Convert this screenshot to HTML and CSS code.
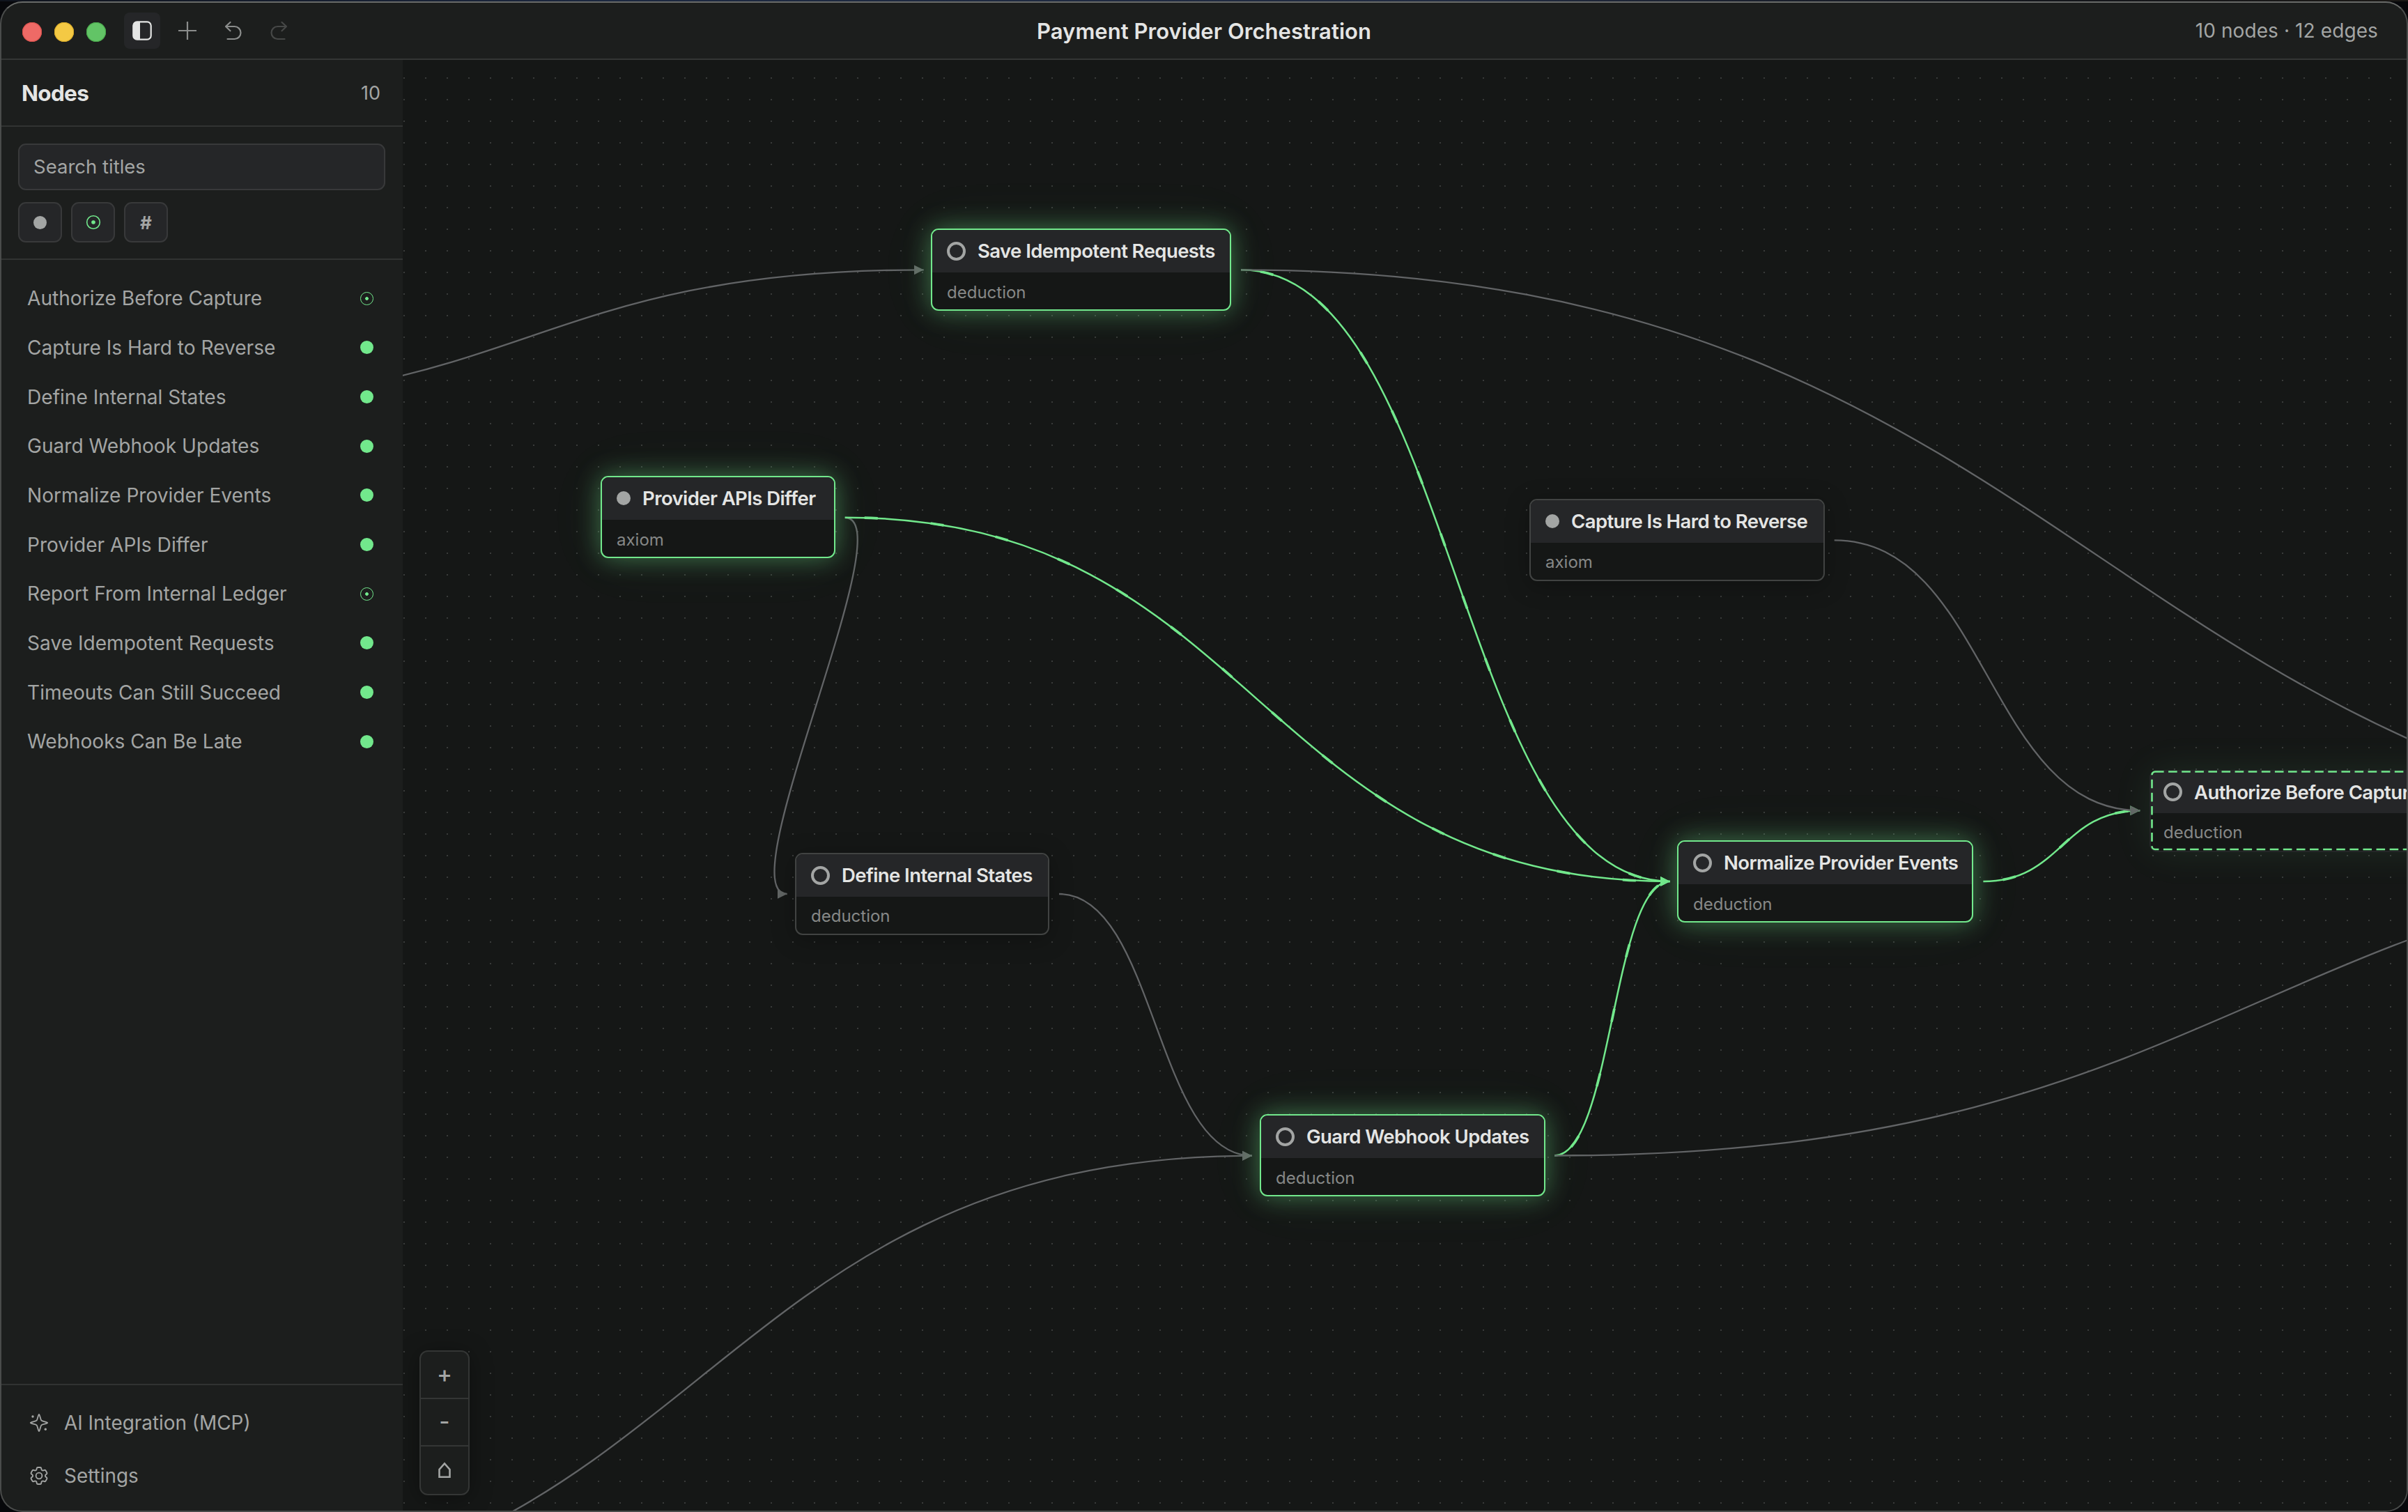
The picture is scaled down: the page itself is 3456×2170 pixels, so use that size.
FILE: index.html
```html
<!DOCTYPE html>
<html lang="en">
<head>
<meta charset="utf-8">
<title>Payment Provider Orchestration</title>
<link rel="stylesheet" href="styles.css">
</head>
<body>
<div class="window">
  <header class="topbar">
    <div class="topbar-left">
      <div class="lights"><i class="light red"></i><i class="light yellow"></i><i class="light green"></i></div>
      <div class="tools">
        <button class="tool active" aria-label="Toggle sidebar">
          <svg width="28" height="28" viewBox="0 0 28 28"><rect x="1.3" y="1.3" width="25.4" height="25.4" rx="5.5" fill="none" stroke="#e4e5e4" stroke-width="2.2"/><path d="M6.5 1h4.5v26H6.5A5.5 5.5 0 0 1 1 21.500V6.500A5.500 5.500 0 0 1 6.500 1z" fill="#e4e5e4"/></svg>
        </button>
        <button class="tool" aria-label="Add node">
          <svg width="28" height="28" viewBox="0 0 28 28"><path d="M14 1v26M1 14h26" fill="none" stroke="#8b8d8c" stroke-width="2.200"/></svg>
        </button>
        <button class="tool" aria-label="Undo">
          <svg width="28" height="28" viewBox="0 0 28 28"><path d="M9.500 2 3 8l6.500 6.300M3 8h12.500a9 9 0 0 1 0 18H5.500" fill="none" stroke="#8b8d8c" stroke-width="2.200" stroke-linecap="round" stroke-linejoin="round"/></svg>
        </button>
        <button class="tool" aria-label="Redo">
          <svg width="28" height="28" viewBox="0 0 28 28"><path d="M18.500 2 25 8l-6.500 6.300M25 8H12.500a9 9 0 0 0 0 18h10" fill="none" stroke="#464847" stroke-width="2.200" stroke-linecap="round" stroke-linejoin="round"/></svg>
        </button>
      </div>
    </div>
    <h1 class="doc-title">Payment Provider Orchestration</h1>
    <div class="stats">10 nodes · 12 edges</div>
  </header>

  <div class="main">
    <aside class="sidebar">
      <div class="side-head"><h2>Nodes</h2><span class="count">10</span></div>
      <div class="side-search">
        <div class="search">Search titles</div>
        <div class="filters">
          <button class="filter"><i class="f-dot"></i></button>
          <button class="filter"><svg width="22" height="22" viewBox="0 0 22 22"><circle cx="11" cy="11" r="9.300" fill="none" stroke="#72e88c" stroke-width="1.600"/><circle cx="11" cy="11" r="2.800" fill="#72e88c"/></svg></button>
          <button class="filter">#</button>
        </div>
      </div>
      <ul class="list">
        <li>Authorize Before Capture<i class="st target"></i></li>
        <li>Capture Is Hard to Reverse<i class="st"></i></li>
        <li>Define Internal States<i class="st"></i></li>
        <li>Guard Webhook Updates<i class="st"></i></li>
        <li>Normalize Provider Events<i class="st"></i></li>
        <li>Provider APIs Differ<i class="st"></i></li>
        <li>Report From Internal Ledger<i class="st target"></i></li>
        <li>Save Idempotent Requests<i class="st"></i></li>
        <li>Timeouts Can Still Succeed<i class="st"></i></li>
        <li>Webhooks Can Be Late<i class="st"></i></li>
      </ul>
      <nav class="side-foot">
        <a class="foot-item"><svg width="28" height="28" viewBox="0 0 28 28" fill="none" stroke="#a3a5a4" stroke-width="1.800" stroke-linejoin="round"><path d="M14 2c1.200 0 2 7.300 3.400 8.700S26.200 12.800 26.200 14s-7.400 2-8.800 3.400S15.200 26 14 26s-2-7.200-3.400-8.600S1.800 15.200 1.800 14s7.400-1.900 8.800-3.300S12.800 2 14 2z"/><circle cx="5" cy="5" r="1.700" fill="#a3a5a4" stroke="none"/><circle cx="23.300" cy="23.300" r="1.700" fill="#a3a5a4" stroke="none"/></svg><span>AI Integration (MCP)</span></a>
        <a class="foot-item"><svg width="28" height="28" viewBox="1.500 1.500 21 21" fill="none" stroke="#a3a5a4" stroke-width="1.400" stroke-linejoin="round"><path d="M9.594 3.940c.09-.542.56-.94 1.110-.94h2.593c.55 0 1.020.398 1.110.94l.213 1.281c.063.374.313.686.645.87.074.04.147.083.22.127.325.196.72.257 1.075.124l1.217-.456a1.125 1.125 0 0 1 1.370.49l1.296 2.247a1.125 1.125 0 0 1-.26 1.431l-1.003.827c-.293.241-.438.613-.43.992a7.723 7.723 0 0 1 0 .255c-.008.378.137.75.43.991l1.004.827c.424.35.534.955.26 1.430l-1.298 2.247a1.125 1.125 0 0 1-1.369.491l-1.217-.456c-.355-.133-.75-.072-1.076.124a6.470 6.470 0 0 1-.22.128c-.331.183-.581.495-.644.869l-.213 1.281c-.09.543-.56.94-1.110.94h-2.594c-.55 0-1.019-.398-1.110-.94l-.213-1.281c-.062-.374-.312-.686-.644-.87a6.520 6.520 0 0 1-.22-.127c-.325-.196-.72-.257-1.076-.124l-1.217.456a1.125 1.125 0 0 1-1.369-.49l-1.297-2.247a1.125 1.125 0 0 1 .26-1.431l1.004-.827c.292-.24.437-.613.43-.991a6.932 6.932 0 0 1 0-.255c.007-.38-.138-.751-.43-.992l-1.004-.827a1.125 1.125 0 0 1-.26-1.430l1.297-2.247a1.125 1.125 0 0 1 1.370-.491l1.216.456c.356.133.751.072 1.076-.124.072-.044.146-.086.22-.128.332-.183.582-.495.644-.869l.214-1.280Z"/><circle cx="12" cy="12" r="3.300"/></svg><span>Settings</span></a>
      </nav>
    </aside>

    <main class="canvas">
      <svg class="edges" width="2876" height="2082" viewBox="578 86 2876 2082">
        <defs>
          <marker id="arrow" markerUnits="userSpaceOnUse" markerWidth="15" markerHeight="16" refX="14" refY="7.500" orient="0"><path d="M0 0.500 14 7.500 0 14.500z" fill="#626665"/></marker>
          <marker id="arrow-on" markerUnits="userSpaceOnUse" markerWidth="15" markerHeight="16" refX="14" refY="7.500" orient="0"><path d="M0 0.500 14 7.500 0 14.500z" fill="#72e88c"/></marker>
        </defs>
        <path id="dots" fill="#393b3a"/>
        <g class="edge">
          <path d="M1212.700 743C1299 743 1043 1283 1129.700 1283"/>
        </g>
        <g class="edge on">
          <path d="M1212.700 742.700C1804.700 742.700 1804.700 1265 2396.800 1265"/>
          <path d="M1781 387.300C2089 387.300 2089 1265 2396.800 1265"/>
          <path d="M2231 1658.500C2314 1658.500 2314 1265 2396.800 1265"/>
          <path d="M2846.400 1265C2959 1265 2959 1163.300 3071.300 1163.300"/>
        </g>
        <g class="flow">
          <path d="M1212.700 742.700C1804.700 742.700 1804.700 1265 2396.800 1265"/>
          <path d="M1781 387.300C2089 387.300 2089 1265 2396.800 1265"/>
          <path d="M2231 1658.500C2314 1658.500 2314 1265 2396.800 1265"/>
          <path d="M2846.400 1265C2959 1265 2959 1163.300 3071.300 1163.300"/>
        </g>
        <g class="edge">
          <path d="M190 580.500C758 580.500 758 387.300 1325.700 387.300"/>
          <path d="M1781 387.300C3017.500 387.300 3017.500 1217 4254 1217"/>
          <path d="M2231 1658.500C3242.500 1658.500 3242.500 1217 4254 1217"/>
          <path d="M1520 1283C1658.500 1283 1658.500 1658.700 1797 1658.700"/>
          <path d="M209 2298C1003 2298 1003 1658.700 1797 1658.700"/>
          <path d="M2632.700 775.300C2852 775.300 2852 1163.300 3071.300 1163.300"/>
        </g>
      </svg>

      <article class="node on" style="left:758px;top:242px;width:431px"><div class="node-head"><i class="ring"></i><span>Save Idempotent Requests</span></div><div class="node-kind">deduction</div></article>
      <article class="node on" style="left:284px;top:597px;width:337px"><div class="node-head"><i class="disc"></i><span>Provider APIs Differ</span></div><div class="node-kind">axiom</div></article>
      <article class="node" style="left:1617px;top:630px;width:424px"><div class="node-head"><i class="disc"></i><span>Capture Is Hard to Reverse</span></div><div class="node-kind">axiom</div></article>
      <article class="node" style="left:563px;top:1138px;width:365px"><div class="node-head"><i class="ring"></i><span>Define Internal States</span></div><div class="node-kind">deduction</div></article>
      <article class="node on" style="left:1829px;top:1120px;width:425px"><div class="node-head"><i class="ring"></i><span>Normalize Provider Events</span></div><div class="node-kind">deduction</div></article>
      <article class="node on" style="left:1230px;top:1513px;width:410px"><div class="node-head"><i class="ring"></i><span>Guard Webhook Updates</span></div><div class="node-kind">deduction</div></article>
      <article class="node pending" style="left:2507px;top:1019px;width:424px"><div class="node-head"><i class="ring"></i><span>Authorize Before Capture</span></div><div class="node-kind">deduction</div>
        <svg class="dashes" width="424" height="118" viewBox="0 0 424 118"><path d="M8 2.500H424" stroke-dasharray="12.600 6.500"/><path d="M8 2.500A4.500 4.500 0 0 0 3.500 7V109.500A4.500 4.500 0 0 0 8 114H424" stroke-dasharray="12.600 6.500" stroke-dashoffset="5.500"/></svg>
      </article>

      <div class="zoom">
        <button>+</button>
        <button>-</button>
        <button><svg width="20" height="24" viewBox="0 0 20 24"><path d="M2.500 21.800V11L10 2.500 17.500 11v10.800z" fill="none" stroke="#a3a5a4" stroke-width="2.600"/></svg></button>
      </div>
    </main>
  </div>
</div>
<script src="dots.js"></script>
</body>
</html>
```
FILE: dots.js
```js
// Background grid: 2px dots snapped to whole pixels.
const STEP = 30.989;
let d = "";
for (let r = 0; r < 68; r++) {
  for (let c = 0; c < 93; c++) {
    d += `M${Math.round(579 + c * STEP)} ${Math.round(111 + r * STEP)}h2v2h-2z`;
  }
}
document.getElementById("dots").setAttribute("d", d);
```
FILE: styles.css
```css
* { box-sizing: border-box; }
body {
  margin: 0;
  width: 3456px;
  height: 2170px;
  overflow: hidden;
  padding-top: 2px;
  background: linear-gradient(90deg, #10141d 0, #1c2840 25%, #222c42 60%, #14161b 85%, #1b1916 100%) top / 100% 2px no-repeat #07080b;
  font-family: Inter, "Liberation Sans", sans-serif;
  font-size: 26px;
  color: #a3a5a4;
}
h1, h2, ul { margin: 0; padding: 0; font-weight: 600; }
button {
  appearance: none;
  border: 0;
  padding: 0;
  background: none;
  font: inherit;
  color: inherit;
  display: flex;
  align-items: center;
  justify-content: center;
}
svg { display: block; flex: none; }

.window {
  height: 2168px;
  border: 2px solid #4a4c4b;
  border-top-color: #686a68;
  border-radius: 32px;
  overflow: hidden;
  background: #1c1e1d;
  display: flex;
  flex-direction: column;
}

.topbar {
  height: 82px;
  flex: none;
  border-bottom: 2px solid #343635;
  display: grid;
  grid-template-columns: 1fr auto 1fr;
  align-items: center;
  padding: 0 41px 0 30px;
}
.topbar-left { display: flex; align-items: center; gap: 26px; }
.lights { display: flex; gap: 18px; padding-top: 4px; }
.light { width: 28px; height: 28px; border-radius: 50%; }
.red { background: #ee6a66; box-shadow: inset 0 0 0 1px #d9504c; }
.yellow { background: #f4c944; box-shadow: inset 0 0 0 1px #d9ab28; }
.green { background: #62c466; box-shadow: inset 0 0 0 1px #48a84a; }
.tools { display: flex; gap: 13.400px; }
.tool { width: 52px; height: 52px; border-radius: 8px; }
.tool.active { background: #252628; }
.doc-title { margin-left: 11px; font-size: 31px; letter-spacing: 0.040px; color: #e4e5e4; }
.stats { text-align: right; font-size: 28px; letter-spacing: 0.1px; }

.main { flex: 1; display: flex; min-height: 0; }
.sidebar { width: 576px; flex: none; display: flex; flex-direction: column; }
.side-head {
  height: 96px;
  border-bottom: 2px solid #313332;
  display: flex;
  align-items: center;
  justify-content: space-between;
  padding: 0 32px 0 29px;
}
.side-head h2 { font-size: 31.500px; font-weight: 700; letter-spacing: -0.7px; color: #e4e5e4; }
.count { font-size: 27px; }
.side-search { padding: 24px 25px 23px 24px; border-bottom: 2px solid #313332; }
.search {
  height: 67px;
  border: 2px solid #38393a;
  border-radius: 11px;
  background: #252628;
  padding: 0 20px;
  line-height: 63px;
  font-size: 27.500px;
}
.filters { display: flex; gap: 13px; margin-top: 17px; }
.filter {
  width: 63px;
  height: 58px;
  border: 2px solid #38393a;
  border-radius: 11px;
  background: #252628;
  font-size: 26px;
  font-weight: 700;
}
.f-dot { width: 19px; height: 19px; border-radius: 50%; background: #a3a5a4; }

.list { list-style: none; flex: 1; padding: 20px 42px 0 37px; font-weight: 400; font-size: 28.100px; }
.list li { height: 70.660px; display: flex; align-items: center; justify-content: space-between; }
.st { width: 19px; height: 19px; border-radius: 50%; background: #72e88c; }
.st.target {
  background: radial-gradient(circle, #72e88c 0 2px, transparent 2.700px);
  border: 1.500px solid #72e88c;
}

.side-foot { height: 182px; border-top: 2px solid #313332; padding: 16px 40px; }
.foot-item { height: 76px; display: flex; align-items: center; gap: 22px; font-size: 27.900px; }

.canvas { flex: 1; position: relative; overflow: hidden; background: #151716; }
.edges { position: absolute; inset: 0; }
.edge path { fill: none; stroke: #626466; stroke-width: 2.300; marker-end: url(#arrow); }
.edge.on path { stroke: #72e88c; stroke-width: 2.500; marker-end: url(#arrow-on); }
.flow path { stroke: #72e88c; stroke-width: 3.700; stroke-dasharray: 19 76; stroke-dashoffset: -28; fill: none; }

.node {
  position: absolute;
  height: 118px;
  border: 2px solid #414342;
  border-radius: 11px;
  background: #151716;
  box-shadow: 0 6px 34px rgba(0, 0, 0, .28);
}
.node-head {
  height: 61px;
  border-radius: 9px 9px 0 0;
  background: #252628;
  display: flex;
  align-items: center;
  gap: 17px;
  padding: 0 0 1px 21px;
  font-size: 27.500px;
  letter-spacing: -0.580px;
  font-weight: 600;
  color: #e4e5e4;
  white-space: nowrap;
}
.node-kind { padding: 13px 21px 0; line-height: 30px; font-size: 24px; color: #868887; }
.ring { width: 27px; height: 27px; border: 4px solid #a3a5a4; border-radius: 50%; }
.disc { width: 20px; height: 20px; border-radius: 50%; background: #a3a5a4; }
.node.on {
  border-color: #72e88c;
  box-shadow: 0 0 36px rgba(114, 232, 140, .42), 0 0 84px rgba(114, 232, 140, .07);
}
.node.on .node-kind { padding-top: 14px; }
.node.pending { border-color: transparent; background: #252628; box-shadow: 0 0 56px rgba(114, 232, 140, .09); }
.node.pending .node-head { height: 60px; padding: 0 0 1px 18px; }
.node.pending .node-kind { background: #151716; height: 54px; padding: 13px 18px 0; border-radius: 0 0 9px 9px; }
.dashes { position: absolute; left: -2px; top: -2px; }
.dashes path { fill: none; stroke: #72e88c; stroke-width: 2.600; }

.zoom {
  position: absolute;
  left: 24px;
  bottom: 22px;
  width: 72px;
  height: 208px;
  border: 2px solid #343635;
  border-radius: 12px;
  background: #1c1e1d;
  box-shadow: 0 4px 32px rgba(0, 0, 0, .35);
}
.zoom button { width: 68px; height: 68px; padding-bottom: 3px; font-size: 33px; font-weight: 500; border-bottom: 2px solid #343635; }
.zoom button:last-child { padding-bottom: 0; border-bottom: 0; }
```
